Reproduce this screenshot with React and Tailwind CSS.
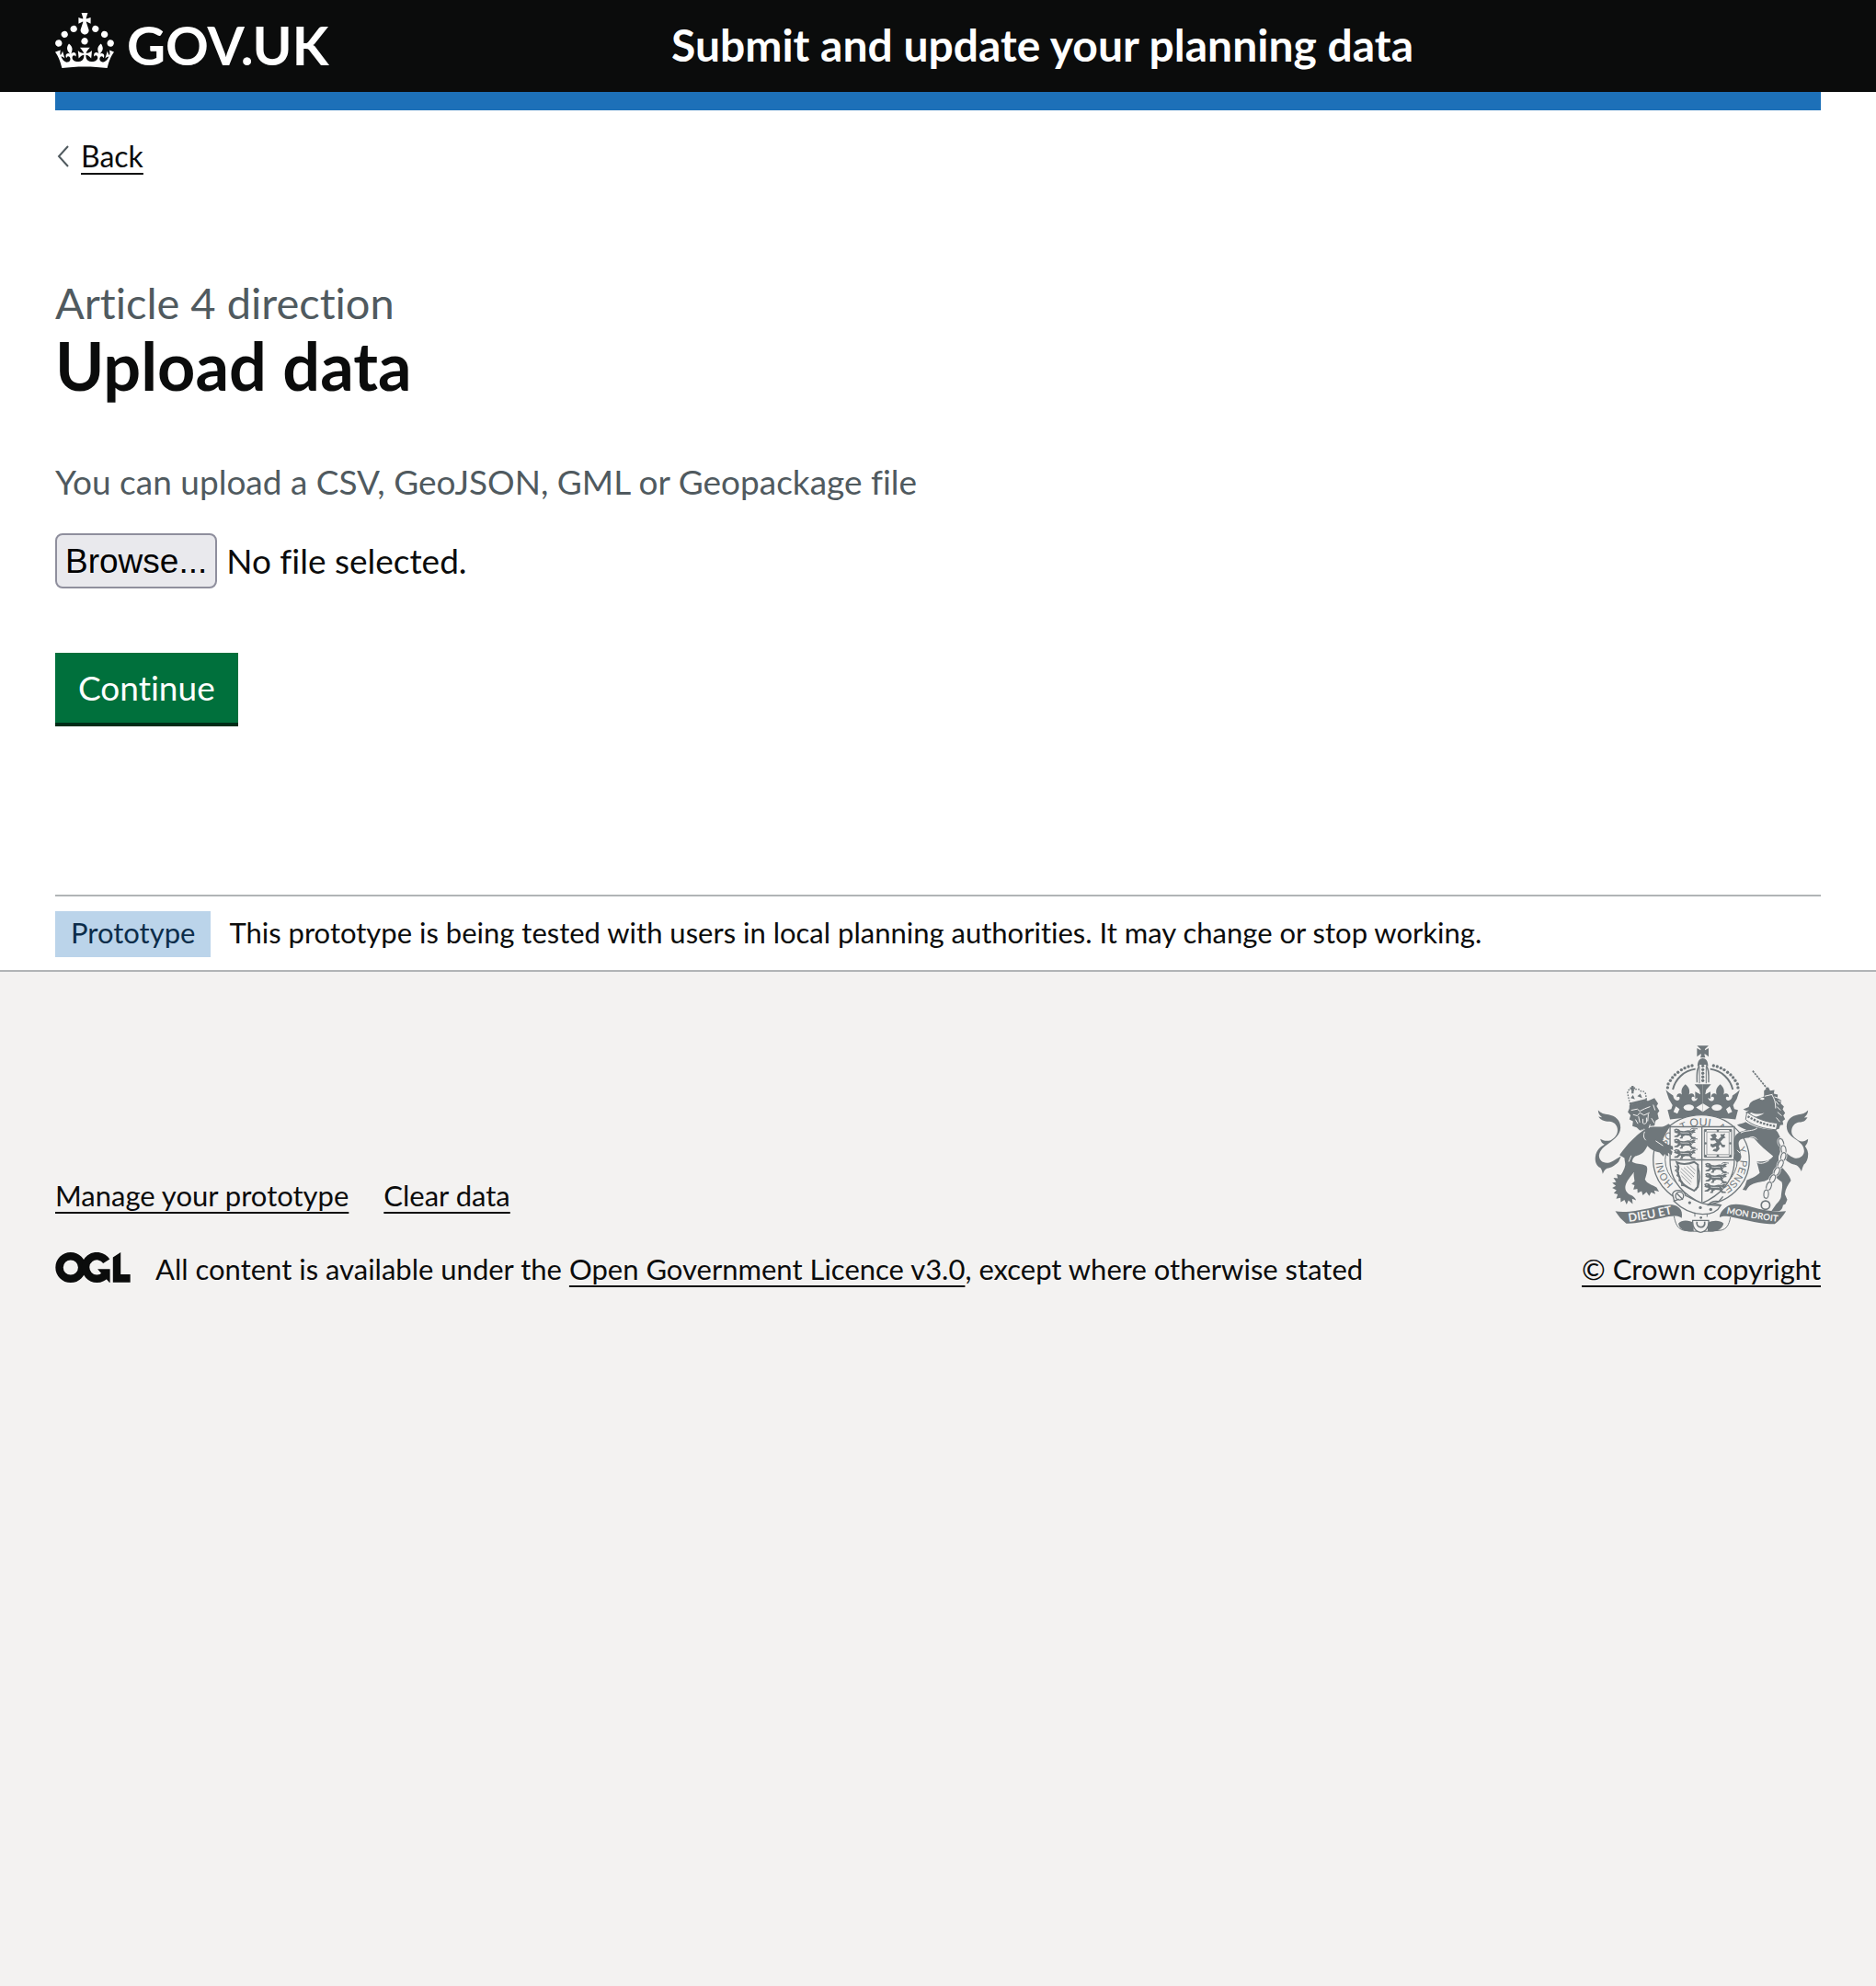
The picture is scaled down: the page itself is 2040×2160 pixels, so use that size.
const INK = "#6f777b";
const PAPER = "#f3f2f1";

function Crown() {
  return (
    <svg viewBox="0 0 32 30" className="mb-[10px] h-[60px] w-16 shrink-0" fill="currentColor" aria-hidden="true">
      <path d="M22.6 10.4c-1 .4-2-.1-2.4-1-.4-.9.1-2 1-2.4.9-.4 2 .1 2.4 1s-.1 2-1 2.4m-5.9 6.7c-.9.4-2-.1-2.4-1-.4-.9.1-2 1-2.4.9-.4 2 .1 2.4 1s-.1 2-1 2.4m10.8-3.7c-1 .4-2-.1-2.4-1-.4-.9.1-2 1-2.4.9-.4 2 .1 2.4 1s0 2-1 2.4m3.3 4.8c-1 .4-2-.1-2.4-1-.4-.9.1-2 1-2.4.9-.4 2 .1 2.4 1s-.1 2-1 2.4M17 4.7l2.3 1.2V2.5l-2.3.7-.2-.2.9-3h-3.4l.9 3-.2.2c-.1.1-2.3-.7-2.3-.7v3.4L15 4.7c.1.1.1.2.2.2l-1.3 4c-.1.2-.1.4-.1.6 0 1.1.8 2 1.9 2.2h.7c1-.2 1.9-1.1 1.9-2.1 0-.2 0-.4-.1-.6l-1.3-4c-.1-.2 0-.2.1-.3m-7.6 5.7c.9.4 2-.1 2.4-1 .4-.9-.1-2-1-2.4-.9-.4-2 .1-2.4 1s0 2 1 2.4m-5 3c.9.4 2-.1 2.4-1 .4-.9-.1-2-1-2.4-.9-.4-2 .1-2.4 1s.1 2 1 2.4m-3.2 4.8c.9.4 2-.1 2.4-1 .4-.9-.1-2-1-2.4-.9-.4-2 .1-2.4 1s0 2 1 2.4m14.8 11c4.4 0 8.6.3 12.3.8 1.1-4.5 2.4-7 3.7-8.8l-2.5-.9c.2 1.3.3 1.9 0 2.7-.4-.4-.8-1.1-1.1-2.3l-1.2 4c.7-.5 1.3-.8 2-.9-1.1 2.5-2.6 3.1-3.5 3-1.1-.2-1.7-1.2-1.5-2.1.3-1.2 1.5-1.5 2.1-.1 1.1-2.3-.8-3-2-2.3 1.9-1.9 2.1-3.5.6-5.6-2.1 1.6-2.1 3.2-1.2 5.5-1.2-1.4-3.2-.6-2.5 1.6.9-1.4 2.1-.5 1.9.8-.2 1.1-1.7 2.1-3.5 1.9-2.7-.2-2.9-2.1-2.9-3.6.7-.1 1.9.5 2.9 1.9l.4-4.3c-1.1 1.1-2.1 1.4-3.2 1.4.4-1.2 2.1-3 2.1-3h-5.4s1.7 1.9 2.1 3c-1.1 0-2.1-.2-3.2-1.4l.4 4.3c1-1.4 2.2-2 2.9-1.9-.1 1.5-.2 3.4-2.9 3.6-1.9.2-3.4-.8-3.5-1.9-.2-1.3 1-2.2 1.9-.8.7-2.3-1.2-3-2.5-1.6.9-2.2.9-3.9-1.2-5.5-1.5 2-1.3 3.7.6 5.6-1.2-.7-3.1 0-2 2.3.6-1.4 1.8-1.1 2.1.1.2.9-.3 1.9-1.5 2.1-.9.2-2.4-.5-3.5-3 .6 0 1.2.3 2 .9l-1.2-4c-.3 1.1-.7 1.9-1.1 2.3-.3-.8-.2-1.4 0-2.7l-2.9.9C1.3 23 2.6 25.5 3.7 30c3.7-.5 7.9-.8 12.3-.8" />
    </svg>
  );
}

function OglLogo() {
  return (
    <svg viewBox="0 0 483 196" className="h-[33px] w-[82px] shrink-0" role="img" aria-label="Open Government Licence">
      <g fill="none" stroke="#0b0c0c" strokeWidth="50">
        <circle cx="98" cy="98" r="73" />
        <path d="M329 58A73 73 0 1 0 322 146" />
      </g>
      <path fill="#0b0c0c" d="M272 108h80v88h-3l-53-60zM371 32L421 0v143h62v51H371z" />
    </svg>
  );
}

/* One of the small walking lions that fill the quarters of the shield. */
function Passant({ x, y }) {
  return (
    <g transform={`translate(${x} ${y})`}>
      <path fill={INK} d="M2 4l8-4 9 2 4 5 12 1 14-3 10 2 8-5 8 2-6 4 5 5-9 1-6 8 5 5 9 1v4H60l-7-9-13-1-8 4-1 6h-9v-3l5-3-3-6-9 8H4v-4l8-2 5-6-9-2-6-4 4-1z" />
      <path fill="none" stroke={INK} strokeWidth="3" d="M56 5c2-8 14-6 24-4" />
      <path fill="none" stroke={PAPER} strokeWidth="2" d="M24 13c8 3 20-1 28 2M8 6h6M58 12l6 6" />
    </g>
  );
}

function beads(points, r) {
  return points.map(([x, y]) => <circle key={`${x}-${y}`} cx={x} cy={y} r={r} fill={INK} />);
}

const ARCH_BEADS = [[279, 188], [281, 176], [288, 165], [295, 155], [303, 146], [313, 138], [324, 130], [335, 124], [347, 119], [359, 116]];

function RoyalCrown() {
  const half = (
    <g>
      {beads(ARCH_BEADS, 5)}
      <path d="M296 194C304 160 332 132 370 127" fill="none" stroke={INK} strokeWidth="6" />
      <path d="M384 117c-9 5-10 22-9 54" fill="none" stroke={INK} strokeWidth="4" />
      <path fill={INK} d="M394 276V177h-27l16 18 3 15-17-9v24l8-4c-3 12-14 14-19 6-3-7 3-13 9-7 0-15-12-16-18-9 4-14 0-25-12-34-11 9-15 20-11 34-6-7-19-4-17 8 8-5 12 1 8 8-6 7-19 2-20-13l-13-9-11-10 10 30 12 20-4 13-12 3 8 31c30-4 63-8 98 0z" />
      <path fill={PAPER} d="M306 249l12 9-7 15-13-6zM372 253l22-14v28z" />
      <ellipse cx="348" cy="253" rx="17" ry="10" fill={PAPER} />
    </g>
  );
  return (
    <g>
      <path fill={INK} d="M375 51h38l-12 11v4l12-7v28l-12-9-2 1 3 11h-16l3-11-2-1-12 9V59l12 7v-4z" />
      <path fill={INK} d="M377 120c-3-37 37-37 34 0l-8-7h-18z" />
      {half}
      <g transform="matrix(-1 0 0 1 788 0)">{half}</g>
      <path fill={INK} d="M340 268h108v24H340z" />
      {beads([[394, 117], [394, 129], [394, 141], [394, 153], [394, 165]], 5)}
      <path d="M383 122v52M405 122v52" stroke={INK} strokeWidth="3" />
    </g>
  );
}

function Garter() {
  return (
    <g>
      <ellipse cx="389" cy="424" rx="157" ry="147" fill={PAPER} stroke={INK} strokeWidth="4" />
      <ellipse cx="389" cy="424" rx="118" ry="104" fill="none" stroke={INK} strokeWidth="3" />
      <path id="motto" d="M389 535A127 111 0 0 1 389 313A127 111 0 0 1 389 535" fill="none" />
      <g fill={INK} fontFamily="'Liberation Sans', sans-serif" fontSize="33">
        <text><textPath href="#motto" startOffset="98">HONI</textPath></text>
        <text><textPath href="#motto" startOffset="230">SO</textPath></text>
        <text><textPath href="#motto" startOffset="308">T</textPath></text>
        <text fontSize="37"><textPath href="#motto" startOffset="338">QUI</textPath></text>
        <text><textPath href="#motto" startOffset="428">A</textPath></text>
        <text><textPath href="#motto" startOffset="520">Y</textPath></text>
        <text><textPath href="#motto" startOffset="561">PENSE</textPath></text>
      </g>
    </g>
  );
}

function Shield() {
  return (
    <g>
      <path fill={PAPER} stroke={INK} strokeWidth="4" d="M287 316h210v112c0 66-50 114-106 138-55-24-104-70-104-138z" />
      <path d="M391 316v246M287 424h210" stroke={INK} strokeWidth="4" />
      <Passant x={297} y={322} />
      <Passant x={297} y={355} />
      <Passant x={297} y={389} />
      <Passant x={399} y={434} />
      <Passant x={399} y={467} />
      <Passant x={396} y={500} />
      <g fill="none" stroke={INK}>
        <path strokeWidth="3" d="M399 325h89v90h-89z" />
        <path strokeWidth="2" d="M407 333h73v74h-73z" />
      </g>
      {beads([[403, 329], [443, 329], [484, 329], [403, 370], [484, 370], [403, 411], [443, 411], [484, 411]], 4)}
      <path fill={INK} d="M419 342l15-4 6 8-4 7 8 4 10-9-3-8 8 1 8-3-3 9 5 4-8 3-9 11 6 9 10 2-3 7h-8l-6-9-5 5 3 9-9 10-14-3 4-6 8-2-1-7-11 4-7-6 1-7 7 2 12-5-5-8-13 1-4-6 9-3z" />
      <g fill="none" stroke={INK}>
        <path strokeWidth="6" d="M309 432c17 8 38 6 57-1l12 9v72l-12 13c-22-10-44-21-47-40l-7-20 3-17z" />
        <path strokeWidth="4" d="M378 450c10 20 8 50-7 73M303 444l10 6-8 9 10 7-5 9 9 6-2 11 10 4-2 11 13 2" />
        <path strokeWidth="2" d="M323 452l36 34M321 462l36 35M324 476l30 29M332 449l33 31M342 445l26 25M352 442l18 17" />
      </g>
    </g>
  );
}

function Buckle() {
  return (
    <g>
      <path fill={PAPER} stroke={INK} strokeWidth="4" d="M295 536c6-20 40-14 42 4 30 16 66 38 116 32-10 20-32 30-60 30-38-2-70-20-92-42z" />
      <path fill="none" stroke={INK} strokeWidth="4" d="M452 572c-16-6-28-2-40 0 6-10 20-14 34-12l14-16" />
      <circle cx="318" cy="542" r="13" fill="none" stroke={INK} strokeWidth="4" />
      <path d="M309 534l20 20M298 560l18-8" stroke={INK} strokeWidth="4" />
      {beads([[351, 564], [386, 580], [420, 586]], 5)}
      <path fill="none" stroke={INK} strokeWidth="3" d="M368 596v26M408 600v22" />
    </g>
  );
}

function Scroll() {
  return (
    <g>
      <path fill={PAPER} stroke={INK} strokeWidth="3" d="M300 608c4 22 10 40 30 46 38 6 86 5 124 0 18-4 26-18 30-42" />
      {beads([[388, 613]], 4)}
      <path fill={INK} d="M314 632c12-14 38-10 50-2v28c-24 2-46-4-50-26zM462 632c-12-12-38-10-52-2v28c26 2 46-4 52-26z" />
      <path fill={PAPER} stroke={INK} strokeWidth="4" d="M361 622h52c2 22-10 38-26 39-16-1-28-17-26-39z" />
      <path fill="none" stroke={INK} strokeWidth="5" d="M375 626c-6 22 30 26 25 0" />
      <path fill={INK} d="M108 592c36 6 88-4 128-14 34-8 62-10 74-2 14 8 18 20 15 38-10-8-24-8-42-5-46 9-96 24-139 23-14-10-26-24-36-40zM666 592c-36 4-76-4-112-14-34-10-66-12-80-2-12 8-26 22-25 36 12-6 26-4 44 0 46 10 92 22 136 22 14-10 26-24 37-42z" />
      <path id="dieu" d="M153 627Q232 616 330 592" fill="none" />
      <path id="mondroit" d="M471 599Q552 616 690 633" fill="none" />
      <g fill={PAPER} fontFamily="Lato, sans-serif" fontSize="34" fontWeight="700">
        <text fontSize="38"><textPath href="#dieu">DIEU ET</textPath></text>
        <text fontSize="29"><textPath href="#mondroit">MON DROIT</textPath></text>
      </g>
    </g>
  );
}

function Lion() {
  return (
    <g fill={INK}>
      <path d="M52 262c8 10 20 13 34 14 22 4 40 18 39 44-1 22-18 36-38 50-16 11-30 22-32 40 0 18 16 28 36 22 14-4 22-14 36-20l-8 18c-14 14-26 20-38 22-7 4-10 9-14 18-2-9-3-14-8-20-12-6-18-20-16-36 3-22 17-33 30-40-8-3-12-9-14-18 10 6 21 8 34 4 18-11 24-24 22-38-2-13-12-22-26-23-18 0-28-5-36-16l12 2c-9-6-13-14-13-23z" />
      <path d="M188 330c22-18 48-14 72-14 6-1 14-5 22-10l8 6c-12 14-20 32-28 48 10 12 22 16 34 20l1 12-12-3 10 8-3 11-12-7 2 12-13-8-4 8-12-13c-16-4-30-10-40-22-8 14-10 22-28 30-14 4-20 10-22 22 14 10 36 6 46 14 8 8 0 30-4 44 6 14 24 18 38 26l8 14-16-4 4 12-14-6-6 12-9-13-12 11-4-14-13 6-1-13-13 2 4-14-10-4 10-9c-1-12-4-20-2-30-10 14-24 28-28 46-2 14 6 24 18 29 8 4 15 10 17 17l-13-5 2 17-14-12-6 14-7-15-12 7-1-14-14 3 5-14-13-4 9-10-14-7 12-7-12-10 13-3-9-13 14 1-3-13 13 3c6-9 12-20 14-30 2-10-2-16-2-26l-16-10c14-20 44-60 90-88z" />
      <path d="M154 246l60-14 22-10 12 18-5 8 9 16-6 8 4 18-10 6-4 16-14 2-8 12-12-4-14 6-10-10-14-4 2-16-12-6 4-14-9-10 5-12z" />
      <path fill="none" stroke={PAPER} strokeWidth="3" d="M160 262l20-4 8 7 16-8 18-7M166 276l14 4 8-10 14 8 18-8M184 282l4 20M216 274l-2 24M198 290v14c4 4 10 2 12-2v-16M232 244l6 18M226 288l10 16M174 292l8 14M222 308l-4 12" />
      <path d="M148 206c2-16 14-16 18-8 10-8 22-6 26 2 10-2 18 6 16 20l4 14-54 12-4-14z" fill="none" stroke={INK} strokeWidth="4" strokeDasharray="5 4" />
      <path d="M154 238l56-14 2 9-56 14zM161 182h7v5h5v6h-5v14h-7v-14h-5v-6h5zM158 222l8-10 6 14zM180 216l10-8 6 14z" />
      <path fill="none" stroke={PAPER} strokeWidth="3" d="M204 332c-5 12-4 20 4 28M240 362l24 16M160 410l-8 20" />
    </g>
  );
}

const CHAIN = [[650, 368, -20], [658, 391, -8], [657, 414, 14], [648, 438, 24], [636, 462, 24], [622, 486, 26], [610, 510, 18], [601, 536, 4]];

function Unicorn() {
  return (
    <g fill={INK}>
      <path d="M738 262c-8 10-20 13-32 14-22 4-38 16-38 40 1 22 16 32 34 44 18 13 24 24 23 38-2 14-16 24-32 20-16-6-26-16-36-26l-4 18c14 22 32 28 48 32 8 6 12 12 15 20 3-9 4-14 8-22 10-8 15-22 14-38-2-11-6-17-10-22 6-6 10-14 10-24-10 8-20 10-31 5-16-10-24-20-23-32 1-16 11-26 26-28 14-1 20-5 26-16l-11 1c8-6 13-14 13-24z" />
      <path fill="none" stroke={INK} strokeWidth="5" strokeDasharray="7 3" d="M557 133L608 196" />
      <path d="M594 198l14-12 6 12 14-2-2 12 13 3-1 11 13 8-2 10 10 10-4 9 8 12-6 8 6 12-8 6 2 12-10 2-4 12-10 2c-20-6-52-8-76-26l2-14c14-2 26-6 36-14-14 4-30 4-42-2-8 4-14 4-20 0l12-7c-8 2-14 1-19-3l18-8c2-10 6-16 14-20l36-14z" />
      <path fill="none" stroke={PAPER} strokeWidth="3" d="M596 216l26-6M620 212c8 12 12 24 12 44M632 232l10 12M636 250l12 12M638 268l14 12M634 286l12 14M576 206l12 6M628 218l12 4M640 230l10 4" />
      <path fill={PAPER} d="M580 225c6-6 12-6 16-1-4 5-10 6-16 1z" />
      <path fill={PAPER} stroke={INK} strokeWidth="3" d="M538 268c26 18 62 34 100 36l-4 22c-40-4-76-12-100-34z" />
      <path fill="none" stroke={INK} strokeWidth="7" strokeDasharray="7 4" d="M541 282c26 16 58 28 92 32" />
      <path d="M534 300c30 20 64 24 98 26 10 10 14 22 18 34 2 20-2 38-8 52-4 24 14 40 26 54 6 8 12 16 14 26-10 14-18 28-20 44l8 18-6 14-8 4c-2 12-6 18-16 20h-22l12-18c10-12 20-20 20-34 2-18 6-32 2-44-12-8-20-16-30-20-12 12-20 18-40 20-24 4-38 10-46 28l-12-2 8-14 6-18c16-6 34-14 42-24-4-12-6-24-10-36 22-2 38 2 54-18-22-18-44-36-62-58-12-6-28-2-40 2-14 4-12 18-8 30l6 28-4 12-10 6-12-14 4-14c-2-20-8-40 2-58 10-14 22-14 36-20-14-6-22-10-30-16 10-6 20-4 28-10z" />
      <path fill="none" stroke={PAPER} strokeWidth="3" d="M518 336c16-10 40-4 54-16M570 432c12 6 24 4 40-6M546 352c10-6 20-2 26 6M506 392l10 10" />
      {CHAIN.map(([x, y, a]) => (
        <g key={y} transform={`translate(${x} ${y}) rotate(${a})`}>
          <ellipse rx="8" ry="14" fill={PAPER} stroke={INK} strokeWidth="4" />
          <ellipse rx="11" ry="17" fill="none" stroke={PAPER} strokeWidth="2" />
        </g>
      ))}
      <circle cx="599" cy="572" r="14" fill={PAPER} stroke={INK} strokeWidth="5" />
    </g>
  );
}

function Crest() {
  return (
    <svg viewBox="41 50 699 613" className="h-[204px] w-[233px]" aria-hidden="true">
      <RoyalCrown />
      <Garter />
      <Shield />
      <Lion />
      <Unicorn />
      <Buckle />
      <Scroll />
    </svg>
  );
}

const link = "underline decoration-2 underline-offset-[6px] hover:decoration-[3px]";

export default function App() {
  return (
    <div className="flex min-h-screen flex-col bg-white font-['Lato',sans-serif] text-[31px] leading-10 text-[#0b0c0c] [font-variant-ligatures:none]">
      <header className="bg-[#0b0c0c] text-white">
        <div className="mx-[60px] flex h-[100px] items-center gap-[30px] pb-[2px]">
          <div className="w-1/3">
            <a href="#" aria-label="GOV.UK" className="inline-flex items-center gap-[14px] align-top">
              <Crown />
              <span className="text-[58px] leading-[60px] font-bold">GOV.UK</span>
            </a>
          </div>
          <a href="#" className="text-5xl font-bold">Submit and update your planning data</a>
        </div>
      </header>
      <div className="mx-[60px] h-5 bg-[#1d70b8]" />

      <div className="mx-[60px]">
        <a href="#" className="mt-[30px] inline-flex items-center gap-[13px] text-[32px]">
          <svg viewBox="0 0 15 24" className="h-6 w-[15px]" fill="none" stroke="#505a5f" strokeWidth="2" aria-hidden="true">
            <path d="M14 1L4 12l10 11" />
          </svg>
          <span className={link}>Back</span>
        </a>

        <main className="mt-[109px]">
          <h1 className="font-bold">
            <span className="block text-[47px] leading-[60px] font-normal text-[#505a5f]">Article 4 direction</span>
            <span className="block text-7xl leading-[76px]">Upload data</span>
          </h1>
          <form className="mt-16" onSubmit={(e) => e.preventDefault()}>
            <p id="file-hint" className="text-[37px] leading-[50px] text-[#505a5f]">
              You can upload a CSV, GeoJSON, GML or Geopackage file
            </p>
            <div className="mt-[31px] flex items-center gap-[10px] text-[37px]">
              <input id="file" type="file" aria-describedby="file-hint" className="sr-only" />
              <label
                htmlFor="file"
                className="flex h-[60px] items-center rounded-lg border-2 border-[#8f8f9d] bg-[#e9e9ed] px-[9px] pt-[2px] font-['Liberation_Sans',sans-serif] text-black"
              >
                Browse...
              </label>
              <span>No file selected.</span>
            </div>
            <button
              type="submit"
              className="mt-[70px] block h-[76px] bg-[#00703c] px-[25px] text-[37px] text-white shadow-[0_4px_0_#002d18]"
            >
              Continue
            </button>
          </form>
        </main>

        <div className="mt-[187px] flex items-center gap-5 border-t-2 border-[#b1b4b6] pt-4 pb-[14px]">
          <strong className="flex h-[50px] items-center bg-[#bbd4ea] px-[17px] pb-1 font-normal text-[#0c2d4a]">Prototype</strong>
          <span className="pb-1">
            This prototype is being tested with users in local planning authorities. It may change or stop working.
          </span>
        </div>
      </div>

      <footer className="flex-1 border-t-2 border-[#b1b4b6] bg-[#f3f2f1] px-[60px] pt-20">
        <div className="flex items-end justify-between">
          <div>
            <ul className="mb-10 flex gap-[38px]">
              <li><a href="#" className={link}>Manage your prototype</a></li>
              <li><a href="#" className={link}>Clear data</a></li>
            </ul>
            <div className="flex gap-[27px]">
              <div className="pt-[2px]">
                <OglLogo />
              </div>
              <p>
                All content is available under the{" "}
                <a href="#" className={link}>Open Government Licence v3.0</a>, except where otherwise stated
              </p>
            </div>
          </div>
          <div className="flex flex-col items-center gap-[19px]">
            <Crest />
            <a href="#" className={link}>© Crown copyright</a>
          </div>
        </div>
      </footer>
    </div>
  );
}
